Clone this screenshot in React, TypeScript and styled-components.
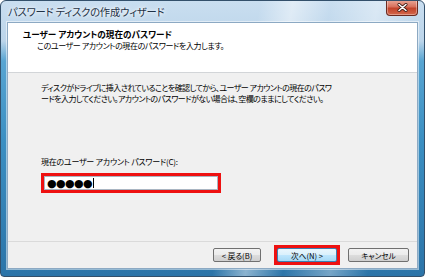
import React from 'react'
import styled, { createGlobalStyle } from 'styled-components'

const GlobalStyle = createGlobalStyle`
  html, body {
    margin: 0;
    padding: 0;
    background: #ffffff;
  }
  body {
    font-family: "Noto Sans CJK JP", "Noto Sans", sans-serif;
    font-feature-settings: "palt";
  }
`

const Window = styled.div`
  width: 425px;
  height: 277px;
  box-sizing: border-box;
  display: flex;
  flex-direction: column;
  padding: 0 6px 7px 6px;
  border-radius: 6px 6px 4px 4px;
  border: 1px solid #33506b;
  background:
    linear-gradient(100deg, rgba(255,255,255,0) 55%, rgba(255,255,255,0.45) 62%, rgba(255,255,255,0) 70%, rgba(255,255,255,0.35) 80%, rgba(255,255,255,0) 88%),
    linear-gradient(180deg, #c9def0 0px, #bcd5ea 40px, #58a5d2 60px, #3b8fc2 140px, #2c74a8 277px);
  overflow: hidden;
`

const TitleBar = styled.div`
  height: 21px;
  flex: none;
  display: flex;
  align-items: center;
  justify-content: space-between;
`

const TitleText = styled.span`
  font-size: 10.3px;
  color: #1e3246;
  letter-spacing: -0.2px;
  padding-left: 1px;
  margin-top: -1px;
  text-shadow: 0 0 6px #ffffff, 0 0 3px #ffffff;
`

const CloseButton = styled.div`
  align-self: flex-start;
  margin-top: -1px;
  width: 32px;
  height: 16px;
  box-sizing: border-box;
  border: 1px solid #6b2a20;
  border-top: none;
  border-radius: 0 0 4px 4px;
  background: linear-gradient(180deg, #e9a99a 0%, #d7705c 45%, #c1432b 55%, #d4684c 100%);
  display: flex;
  align-items: center;
  justify-content: center;
  box-shadow: inset 0 0 0 1px rgba(255,255,255,0.35);
`

const Client = styled.div`
  flex: 1;
  display: flex;
  flex-direction: column;
  background: #f0f0f0;
  border: 1px solid #8ca9c3;
  box-shadow: 0 0 0 1px rgba(255,255,255,0.5);
`

const Header = styled.div`
  height: 50px;
  flex: none;
  box-sizing: border-box;
  background: #ffffff;
  border-bottom: 1px solid #d2d5d8;
  padding: 6px 0 0 15px;
`

const HeaderTitle = styled.div`
  font-size: 8.6px;
  font-weight: 700;
  color: #000;
  line-height: 11px;
`

const HeaderSub = styled.div`
  font-size: 8px;
  color: #000;
  line-height: 12px;
  padding-left: 14px;
  letter-spacing: -0.4px;
`

const Body = styled.div`
  flex: 1;
  padding: 9px 0 0 33px;
  display: flex;
  flex-direction: column;
`

const Paragraph = styled.p`
  margin: 0;
  font-size: 8px;
  line-height: 11px;
  color: #000;
  white-space: nowrap;
  letter-spacing: -0.55px;
`

const FieldLabel = styled.div`
  margin-top: 53px;
  font-size: 8px;
  line-height: 10px;
  color: #000;
  letter-spacing: -0.25px;
`

const Highlight = styled.div<{ $w: number; $h: number; $top?: number }>`
  width: ${p => p.$w}px;
  height: ${p => p.$h}px;
  margin-top: ${p => p.$top ?? 0}px;
  box-sizing: border-box;
  border: 3px solid #ee1111;
  background: #ee1111;
  display: flex;
  align-items: stretch;
  justify-content: stretch;
`

const InputBox = styled.div`
  flex: 1;
  background: #ffffff;
  border: 1px solid #a9b5c2;
  display: flex;
  align-items: center;
  padding-left: 2px;
`

const Dots = styled.span`
  font-family: "DejaVu Sans", sans-serif;
  font-size: 11px;
  letter-spacing: -0.6px;
  color: #000;
  line-height: 1;
`

const Caret = styled.span`
  display: inline-block;
  width: 1px;
  height: 10px;
  background: #000;
  margin-left: 1px;
`

const Footer = styled.div`
  height: 27px;
  flex: none;
  box-sizing: border-box;
  border-top: 1px solid #dadada;
  display: flex;
  align-items: center;
  justify-content: flex-end;
  padding-right: 8px;
`

const Button = styled.div<{ $w: number; $focus?: boolean }>`
  width: ${p => p.$w}px;
  height: 14px;
  box-sizing: border-box;
  border: 1px solid ${p => (p.$focus ? '#3c7fb1' : '#707070')};
  border-radius: 2px;
  background: ${p =>
    p.$focus
      ? 'linear-gradient(180deg, #eaf6fd 0%, #d9f0fc 50%, #bee6fd 51%, #a7d9f5 100%)'
      : 'linear-gradient(180deg, #f2f2f2 0%, #ebebeb 50%, #dddddd 51%, #cfcfcf 100%)'};
  display: flex;
  align-items: center;
  justify-content: center;
  font-size: 7.6px;
  color: #000;
  white-space: nowrap;
`

const Gap = styled.div<{ $w: number }>`
  width: ${p => p.$w}px;
  flex: none;
`

const Close = () => (
  <svg width="11" height="9" viewBox="0 0 11 9">
    <path d="M2 1.5 L9 7.5 M9 1.5 L2 7.5" stroke="#3a1a14" strokeWidth="3" strokeLinecap="round" />
    <path d="M2 1.5 L9 7.5 M9 1.5 L2 7.5" stroke="#ffffff" strokeWidth="1.6" strokeLinecap="round" />
  </svg>
)

export default function App() {
  return (
    <>
      <GlobalStyle />
      <Window>
        <TitleBar>
          <TitleText>パスワード ディスクの作成ウィザード</TitleText>
          <CloseButton>
            <Close />
          </CloseButton>
        </TitleBar>
        <Client>
          <Header>
            <HeaderTitle>ユーザー アカウントの現在のパスワード</HeaderTitle>
            <HeaderSub>このユーザー アカウントの現在のパスワードを入力します。</HeaderSub>
          </Header>
          <Body>
            <Paragraph>
              ディスクがドライブに挿入されていることを確認してから、ユーザー アカウントの現在のパスワ
              <br />
              ードを入力してください。アカウントのパスワードがない場合は、空欄のままにしてください。
            </Paragraph>
            <FieldLabel>現在のユーザー アカウント パスワード(C):</FieldLabel>
            <Highlight $w={180} $h={20} $top={6}>
              <InputBox>
                <Dots>●●●●●</Dots>
                <Caret />
              </InputBox>
            </Highlight>
          </Body>
          <Footer>
            <Button $w={48}>&lt; 戻る(B)</Button>
            <Gap $w={13} />
            <Highlight $w={66} $h={20}>
              <Button $w={60} $focus>次へ(N) &gt;</Button>
            </Highlight>
            <Gap $w={8} />
            <Button $w={61}>キャンセル</Button>
          </Footer>
        </Client>
      </Window>
    </>
  )
}
